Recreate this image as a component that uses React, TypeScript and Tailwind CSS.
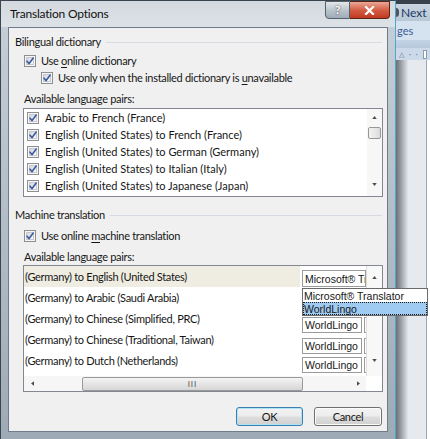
import React from "react";

const ui = "font-['Lato','Liberation_Sans',sans-serif] text-[11px] leading-[14px] tracking-[-0.3px] text-[#161616]";
const comboFont = "font-['Liberation_Sans','Arial',sans-serif] text-[10.5px] tracking-normal";

function Tri({ dir }: { dir: "up" | "down" | "left" | "right" }) {
  const paths = {
    up: "M0 4 L3 0 L6 4Z",
    down: "M0 0 L6 0 L3 4Z",
    left: "M4 0 L4 6 L0 3Z",
    right: "M0 0 L4 3 L0 6Z",
  };
  const vertical = dir === "up" || dir === "down";
  return (
    <svg viewBox={vertical ? "0 0 6 4" : "0 0 4 6"} className={vertical ? "h-[3px] w-[5px]" : "h-[5px] w-[3px]"}>
      <path d={paths[dir]} fill="#4d4d4d" />
    </svg>
  );
}

function CheckBox() {
  return (
    <span className="relative flex h-[12px] w-[12px] shrink-0 items-center justify-center border border-[#8e8f8f] bg-[#f6f6f6]">
      <span className="h-[8px] w-[8px] border border-[#c6cad0] bg-linear-to-br from-[#d2d6dc] to-[#fbfbfb]" />
      <svg viewBox="0 0 12 12" className="absolute left-[-1px] top-[-1px] h-[12px] w-[12px]">
        <path d="M3 6.2 L5.1 8.6 L9.2 3.1" fill="none" stroke="#3d5b9f" strokeWidth="1.6" strokeLinecap="round" strokeLinejoin="round" />
      </svg>
    </span>
  );
}

function GroupHeader({ label }: { label: string }) {
  return (
    <div className="flex h-[14px] items-center">
      <span className="whitespace-nowrap">{label}</span>
      <span className="ml-[5px] mr-[1px] h-px flex-1 bg-[#d5dbe0]" />
    </div>
  );
}

const dictPairs = [
  "Arabic to French (France)",
  "English (United States) to French (France)",
  "English (United States) to German (Germany)",
  "English (United States) to Italian (Italy)",
  "English (United States) to Japanese (Japan)",
];

const machinePairs = [
  { text: "(Germany) to English (United States)", service: "Microsoft® Translator", gap: "mt-[4px]" },
  { text: "(Germany) to Arabic (Saudi Arabia)", service: "", gap: "" },
  { text: "(Germany) to Chinese (Simplified, PRC)", service: "WorldLingo", gap: "mt-[9px]" },
  { text: "(Germany) to Chinese (Traditional, Taiwan)", service: "WorldLingo", gap: "mt-[9px]" },
  { text: "(Germany) to Dutch (Netherlands)", service: "WorldLingo", gap: "mt-[7px]" },
];

function DictList() {
  return (
    <div className="ml-[8px] flex h-[89px] border border-[#828790] bg-white">
      <div className="flex flex-1 flex-col overflow-hidden tracking-normal">
        {dictPairs.map((p) => (
          <div key={p} className="flex h-[17px] shrink-0 items-center gap-[6px] pl-[3px]">
            <CheckBox />
            <span className="whitespace-nowrap">{p}</span>
          </div>
        ))}
      </div>
      <div className="flex w-[15px] flex-col items-center bg-[#f7f7f7]">
        <div className="flex h-[16px] items-center justify-center">
          <Tri dir="up" />
        </div>
        <div className="mt-[2px] h-[12px] w-[13px] rounded-[2px] border border-[#979797] bg-linear-to-r from-[#f3f3f3] to-[#dcdcdc]" />
        <div className="flex-1" />
        <div className="flex h-[18px] items-start justify-center pt-[5px]">
          <Tri dir="down" />
        </div>
      </div>
    </div>
  );
}

function Combo({ index, service, gap }: { index: number; service: string; gap: string }) {
  if (index === 0) {
    return (
      <div className={`relative h-[17px] w-[64px] ${gap} ${comboFont}`}>
        <div className="flex h-full items-center overflow-hidden whitespace-nowrap border border-[#9b9b9b] bg-white pl-[2px]">
          {service}
        </div>
        <div className="absolute left-0 top-full z-20 mt-px w-[126px] border border-[#6a6a6a] bg-white">
          <div className="flex h-[13px] items-center whitespace-nowrap pl-[1px]">Microsoft® Translator</div>
          <div className="flex h-[13px] items-center border border-dotted border-[#1b1b1b] bg-[#9fcaf2]">WorldLingo</div>
        </div>
      </div>
    );
  }
  if (!service) return null;
  return (
    <div className={`flex h-[16px] ${gap} ${comboFont}`}>
      <div className="flex w-[60px] items-center overflow-hidden whitespace-nowrap border border-[#9b9b9b] bg-white pl-[2px]">
        {service}
      </div>
      <div className="ml-[2px] w-[2px] border-y border-l border-[#9b9b9b]" />
    </div>
  );
}

function MachineList() {
  return (
    <div className="ml-[8px] flex h-[127px] flex-col border border-[#828790] bg-white">
      <div className="flex h-[110px]">
        <div className="flex flex-1 flex-col">
          {machinePairs.map((p, i) => (
            <div key={p.text} className="flex h-[21px] shrink-0">
              <div className={`flex flex-1 items-center whitespace-nowrap pl-px ${i === 0 ? "bg-[#efede2]" : ""}`}>
                {p.text}
              </div>
              <div className="w-[66px] pl-[2px]">
                <Combo index={i} service={p.service} gap={p.gap} />
              </div>
            </div>
          ))}
        </div>
        <div className="flex w-[16px] flex-col items-center border-l border-[#dcdcdc] bg-[#f8f8f8]">
          <div className="flex h-[22px] items-center justify-center">
            <Tri dir="up" />
          </div>
          <div className="flex-1" />
          <div className="flex h-[18px] items-start justify-center pt-[1px]">
            <Tri dir="down" />
          </div>
        </div>
      </div>
      <div className="flex h-[15px]">
        <div className="flex flex-1 items-center bg-[#f6f6f6]">
          <div className="flex h-full w-[16px] items-center justify-center">
            <Tri dir="left" />
          </div>
          <div className="flex h-full flex-1 items-center">
            <div className="ml-[42px] flex h-[14px] w-[221px] items-center justify-center rounded-[2px] border border-[#9a9a9a] bg-linear-to-b from-[#f4f4f4] to-[#d6d6d6] text-[8px] leading-none tracking-[1px] text-[#555]">
              III
            </div>
          </div>
          <div className="flex h-full w-[16px] items-center justify-center">
            <Tri dir="right" />
          </div>
        </div>
        <div className="w-[16px] bg-white" />
      </div>
    </div>
  );
}

function Button({ label, primary }: { label: string; primary?: boolean }) {
  return (
    <div
      className={`flex h-[19px] items-center justify-center rounded-[3px] border bg-[linear-gradient(#f3f3f3,#ececec_48%,#dedede_52%,#d0d0d0)] ${
        primary
          ? "w-[67px] border-[#3c7fb1] shadow-[inset_0_0_0_1px_#aee3f5]"
          : "w-[68px] border-[#707070] shadow-[inset_0_0_0_1px_#fbfbfb]"
      }`}
    >
      {label}
    </div>
  );
}

function Behind() {
  return (
    <div className="flex h-full flex-1 flex-col overflow-hidden font-['Lato',sans-serif] tracking-normal">
      <div className="h-[4px] bg-[#39424b]" />
      <div className="flex h-[17px] items-center gap-[2px] bg-linear-to-b from-[#c9d5e1] to-[#b8c7d6] text-[12px] text-[#1d3766]">
        <span className="ml-[-4px] h-[9px] w-[7px] rounded-full bg-[#4a5663]" />
        Next
      </div>
      <div className="flex h-[19px] items-center bg-[#d5e2f0] pl-[1px] text-[11px] text-[#3b5d94]">ges</div>
      <div className="h-[8px] bg-linear-to-b from-[#c3d3e5] to-[#b6c8dc]" />
      <div className="flex h-[12px] items-center gap-[5px] bg-[#cbd9e8] pl-[3px] text-[7px] text-[#5b6e86]">
        <span>△</span>
        <span>·</span>
        <span>·</span>
        <span className="h-[9px] w-[4px] border border-[#8a9bb0] bg-white" />
      </div>
      <div className="flex flex-1">
        <div className="w-[12px] bg-linear-to-r from-[#6a7077] to-[#e2e6ea]" />
        <div className="flex-1 bg-[#e6eaee]" />
        <div className="w-px bg-[#93a9c1]" />
        <div className="w-[3px] bg-white" />
      </div>
    </div>
  );
}

export default function App() {
  return (
    <div className={`flex h-[439px] w-[430px] overflow-hidden bg-[#e6eaee] ${ui}`}>
      <div className="flex h-[439px] w-[396px] shrink-0 flex-col border-x border-t border-[#3b4550] border-r-[#4aa9c9] bg-linear-to-b from-[#c7d0d8] to-[#9eaab6]">
        <div className="flex h-[26px] shrink-0 items-start bg-linear-to-b from-[#d3d9df] to-[#dde2e7]">
          <span className="self-center pl-[9px] text-[12px] tracking-[-0.2px] text-[#111]">Translation Options</span>
          <div className="ml-auto mr-[5px] flex h-[18px]">
            <div className="flex w-[25px] items-center justify-center rounded-bl-[4px] border border-[#56606a] bg-linear-to-b from-[#e4e8ec] via-[#bcc5cd] to-[#9eabb7] text-[12px] font-bold text-white [text-shadow:0_0_2px_#2a2a2a]">
              ?
            </div>
            <div className="flex w-[40px] items-center justify-center rounded-br-[4px] border border-l-0 border-[#5b2419] bg-linear-to-b from-[#eaa898] via-[#d35d44] to-[#c0381f]">
              <svg viewBox="0 0 10 9" className="h-[9px] w-[11px]">
                <path d="M1.5 1 L8.5 8 M8.5 1 L1.5 8" stroke="#fff" strokeWidth="2.2" strokeLinecap="square" />
              </svg>
            </div>
          </div>
        </div>
        <div className="flex flex-1 px-[7px] pb-[7px]">
          <div className="flex h-[405px] w-[380px] flex-col border border-[#6f7c89] bg-[#f0f0f0] pl-[6px] pr-[4px]">
            <div className="mt-[7px]">
              <GroupHeader label="Bilingual dictionary" />
            </div>
            <div className="mt-[5px] flex h-[14px] items-center gap-[5px] pl-[9px]">
              <CheckBox />
              <span>
                Use <span className="underline underline-offset-2">o</span>nline dictionary
              </span>
            </div>
            <div className="mt-[3px] flex h-[14px] items-center gap-[5px] pl-[26px]">
              <CheckBox />
              <span>
                Use only when the installed dictionary is <span className="underline underline-offset-2">u</span>navailable
              </span>
            </div>
            <div className="mt-[7px] h-[14px] pl-[9px]">Available language pairs:</div>
            <div className="mt-[2px]">
              <DictList />
            </div>
            <div className="mt-[11px]">
              <GroupHeader label="Machine translation" />
            </div>
            <div className="mt-[7px] flex h-[14px] items-center gap-[5px] pl-[9px]">
              <CheckBox />
              <span>
                Use online <span className="underline underline-offset-2">m</span>achine translation
              </span>
            </div>
            <div className="mt-[7px] h-[14px] pl-[9px]">Available language pairs:</div>
            <div className="mt-[1px]">
              <MachineList />
            </div>
            <div className="mt-[15px] flex justify-end gap-[11px] pr-[1px]">
              <Button label="OK" primary />
              <Button label="Cancel" />
            </div>
          </div>
        </div>
      </div>
      <Behind />
    </div>
  );
}
